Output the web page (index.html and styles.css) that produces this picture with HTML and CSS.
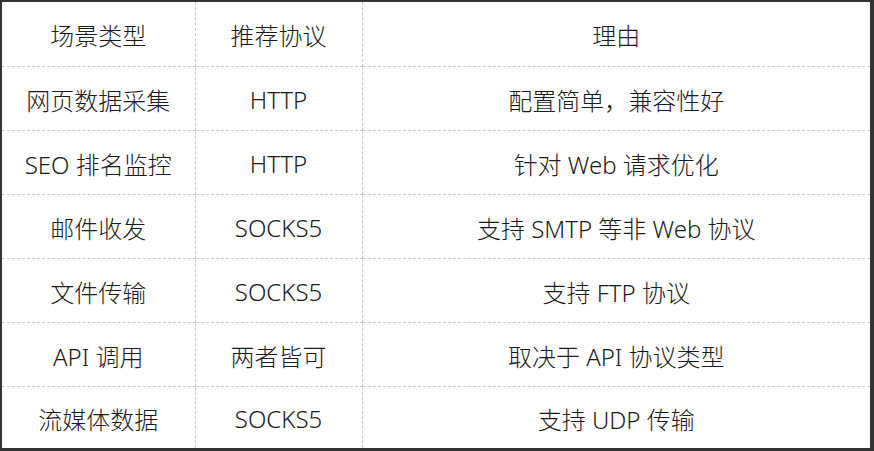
FILE: index.html
```html
<!DOCTYPE html>
<html lang="zh-CN">
<head>
<meta charset="utf-8">
<link rel="stylesheet" href="styles.css">
</head>
<body>
<div class="frame">
  <table class="grid">
    <colgroup>
      <col class="c1"><col class="c2"><col class="c3">
    </colgroup>
    <tr><td>场景类型</td><td>推荐协议</td><td>理由</td></tr>
    <tr><td>网页数据采集</td><td>HTTP</td><td>配置简单，兼容性好</td></tr>
    <tr><td>SEO 排名监控</td><td>HTTP</td><td>针对 Web 请求优化</td></tr>
    <tr><td>邮件收发</td><td>SOCKS5</td><td>支持 SMTP 等非 Web 协议</td></tr>
    <tr><td>文件传输</td><td>SOCKS5</td><td>支持 FTP 协议</td></tr>
    <tr><td>API 调用</td><td>两者皆可</td><td>取决于 API 协议类型</td></tr>
    <tr><td>流媒体数据</td><td>SOCKS5</td><td>支持 UDP 传输</td></tr>
  </table>
</div>
</body>
</html>
```
FILE: styles.css
```css
html, body {
  margin: 0;
  padding: 0;
  background: #fff;
}
.frame {
  width: 874px;
  height: 451px;
  box-sizing: border-box;
  border-style: solid;
  border-color: #333;
  border-width: 2px 4px 3px 2px;
  background: #fff;
  overflow: hidden;
}
.grid {
  width: 100%;
  border-collapse: collapse;
  table-layout: fixed;
  font-family: "Noto Sans", "Noto Sans CJK SC", sans-serif;
  font-weight: 300;
  font-size: 24px;
  color: #1a1a1a;
}
.c1 { width: 193px; }
.c2 { width: 167px; }
.grid td {
  text-align: center;
  vertical-align: middle;
  border: 1px dashed #c8c8c8;
  padding: 1px 0 0;
  height: 62px;
  white-space: nowrap;
}
.grid tr:first-child td { border-top: none; height: 63px; }
.grid tr:last-child td { border-bottom: none; height: 60px; }
.grid td:first-child { border-left: none; }
.grid td:last-child { border-right: none; }
```
